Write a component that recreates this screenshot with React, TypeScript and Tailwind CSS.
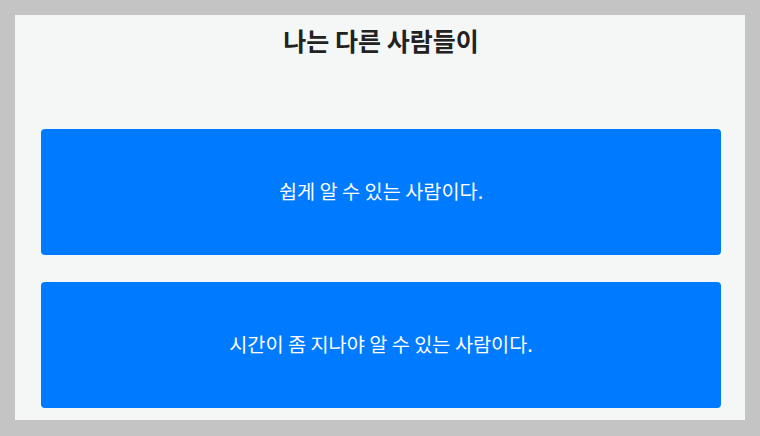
export default function App() {
  const options = ["쉽게 알 수 있는 사람이다.", "시간이 좀 지나야 알 수 있는 사람이다."];

  return (
    <div
      className="w-[760px] h-[436px] bg-[#c4c4c4] pt-[15px] pl-[15px] pr-[15px]"
      style={{ fontFamily: '"Noto Sans CJK KR", "Noto Sans", sans-serif' }}
    >
      <div className="h-[405px] bg-[#f5f6f6] pl-[26px] pr-[24px] flex flex-col">
        {/* Question */}
        <h1 className="mt-[9px] h-[32px] leading-[32px] text-center text-[25px] font-bold text-[#222222]">
          나는 다른 사람들이
        </h1>

        {/* Answers */}
        <div className="mt-[73px] flex flex-col gap-[27px]">
          {options.map((label) => (
            <button
              key={label}
              className="h-[126px] w-full rounded-[4px] bg-[#007bff] text-white text-[19.7px] leading-[24px] pb-[2px] flex items-center justify-center"
            >
              {label}
            </button>
          ))}
        </div>
      </div>
    </div>
  );
}
